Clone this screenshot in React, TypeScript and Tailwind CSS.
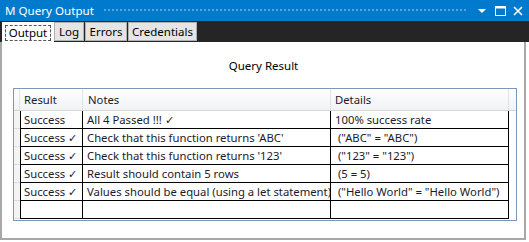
import React from "react";

const rows = [
  ["Success", "All 4 Passed !!! ✓", "100% success rate"],
  ["Success ✓", "Check that this function returns 'ABC'", " (\"ABC\" = \"ABC\")"],
  ["Success ✓", "Check that this function returns '123'", " (\"123\" = \"123\")"],
  ["Success ✓", "Result should contain 5 rows", " (5 = 5)"],
  ["Success ✓", "Values should be equal (using a let statement)", " (\"Hello World\" = \"Hello World\")"],
  ["", "", ""],
];

export default function App() {
  return (
    <div
      className="w-[529px] h-[242px] bg-white flex flex-col overflow-hidden text-[#1e1e1e]"
      style={{ fontFamily: '"Noto Sans", "Open Sans", sans-serif' }}
    >
      {/* Title bar */}
      <div className="h-[21px] bg-[#007acc] flex items-center pl-[5px] pr-[6px] shrink-0">
        <span className="text-white text-[11.6px] leading-none whitespace-nowrap">M Query Output</span>
        <div className="flex-1 h-[5px] bg-[radial-gradient(circle,#5aa5dd_0.7px,transparent_0.9px)] bg-[length:4px_4px] ml-[9px] mr-[8px]" />
        <div className="flex items-center gap-[7px]">
          <svg width="10" height="10" viewBox="0 0 10 10" className="mx-[1px]">
            <path d="M1 3 L9 3 L5 7 Z" fill="white" />
          </svg>
          <svg width="11" height="10" viewBox="0 0 11 10">
            <rect x="0.5" y="0.5" width="10" height="9" fill="none" stroke="white" strokeWidth="1" />
            <rect x="0.5" y="0.5" width="10" height="2" fill="white" />
          </svg>
          <svg width="10" height="10" viewBox="0 0 10 10">
            <path d="M1 1 L9 9 M9 1 L1 9" stroke="white" strokeWidth="1.6" />
          </svg>
        </div>
      </div>

      {/* Tab strip */}
      <div className="h-[21px] bg-[#252526] flex items-end pl-[2px] shrink-0 relative">
        <div className="h-[21px] w-[52px] bg-white flex items-center justify-center relative top-[1px] z-10">
          <div className="border border-dashed border-[#555] h-[16px] w-[46px] flex items-center justify-center text-[11.5px] leading-none text-black">
            Output
          </div>
        </div>
        <div className="h-[19px] mb-[1px] w-[30px] bg-[#e5e5e5] border border-[#b0b0b0] flex items-center justify-center text-[11.5px] text-black leading-none">
          Log
        </div>
        <div className="h-[19px] mb-[1px] w-[42px] ml-[1px] bg-[#e5e5e5] border border-[#b0b0b0] flex items-center justify-center text-[11.5px] text-black leading-none">
          Errors
        </div>
        <div className="h-[19px] mb-[1px] w-[69px] ml-[1px] bg-[#e5e5e5] border border-[#b0b0b0] flex items-center justify-center text-[11.5px] text-black leading-none">
          Credentials
        </div>
      </div>

      {/* Content */}
      <div className="flex-1 border-l-2 border-r-2 border-b-2 border-[#a8a8a8] mb-[2px] mr-[3px] flex flex-col">
        <div className="h-[46px] flex items-center justify-center text-[11.5px] text-black pl-[1px] pt-[1px]">Query Result</div>
        <div className="ml-[11px] w-[504px] h-[133px] border border-[#7d97b8] flex flex-col text-[11.3px] leading-none text-[#1b1b2b]">
          {/* header */}
          <div className="h-[22px] flex bg-[linear-gradient(#ffffff,#f1f2f4)] border-b border-[#d6d6d6]">
            <div className="w-[6px] shrink-0 border-r border-[#e2e2e2]" />
            <div className="w-[63px] shrink-0 flex items-center pl-[4px] border-r border-[#e2e2e2]">Result</div>
            <div className="w-[248px] shrink-0 flex items-center pl-[5px] border-r border-[#e2e2e2]">Notes</div>
            <div className="w-[178px] shrink-0 flex items-center pl-[4px] border-r border-[#e2e2e2]">Details</div>
            <div className="flex-1" />
          </div>
          {rows.map((r, i) => (
            <div key={i} className="h-[18px] flex">
              <div className="w-[6px] shrink-0 bg-[#f4f4f4] border-b border-[#dcdcdc]" />
              <div className="w-[63px] shrink-0 flex items-center pl-[3px] border-l border-r border-b border-black whitespace-pre overflow-hidden">{r[0]}</div>
              <div className="w-[248px] shrink-0 flex items-center pl-[4px] border-r border-b border-black whitespace-pre overflow-hidden">{r[1]}</div>
              <div className="w-[178px] shrink-0 flex items-center pl-[4px] border-r border-b border-black whitespace-pre overflow-hidden">{r[2]}</div>
              <div className="flex-1" />
            </div>
          ))}
        </div>
      </div>
    </div>
  );
}
